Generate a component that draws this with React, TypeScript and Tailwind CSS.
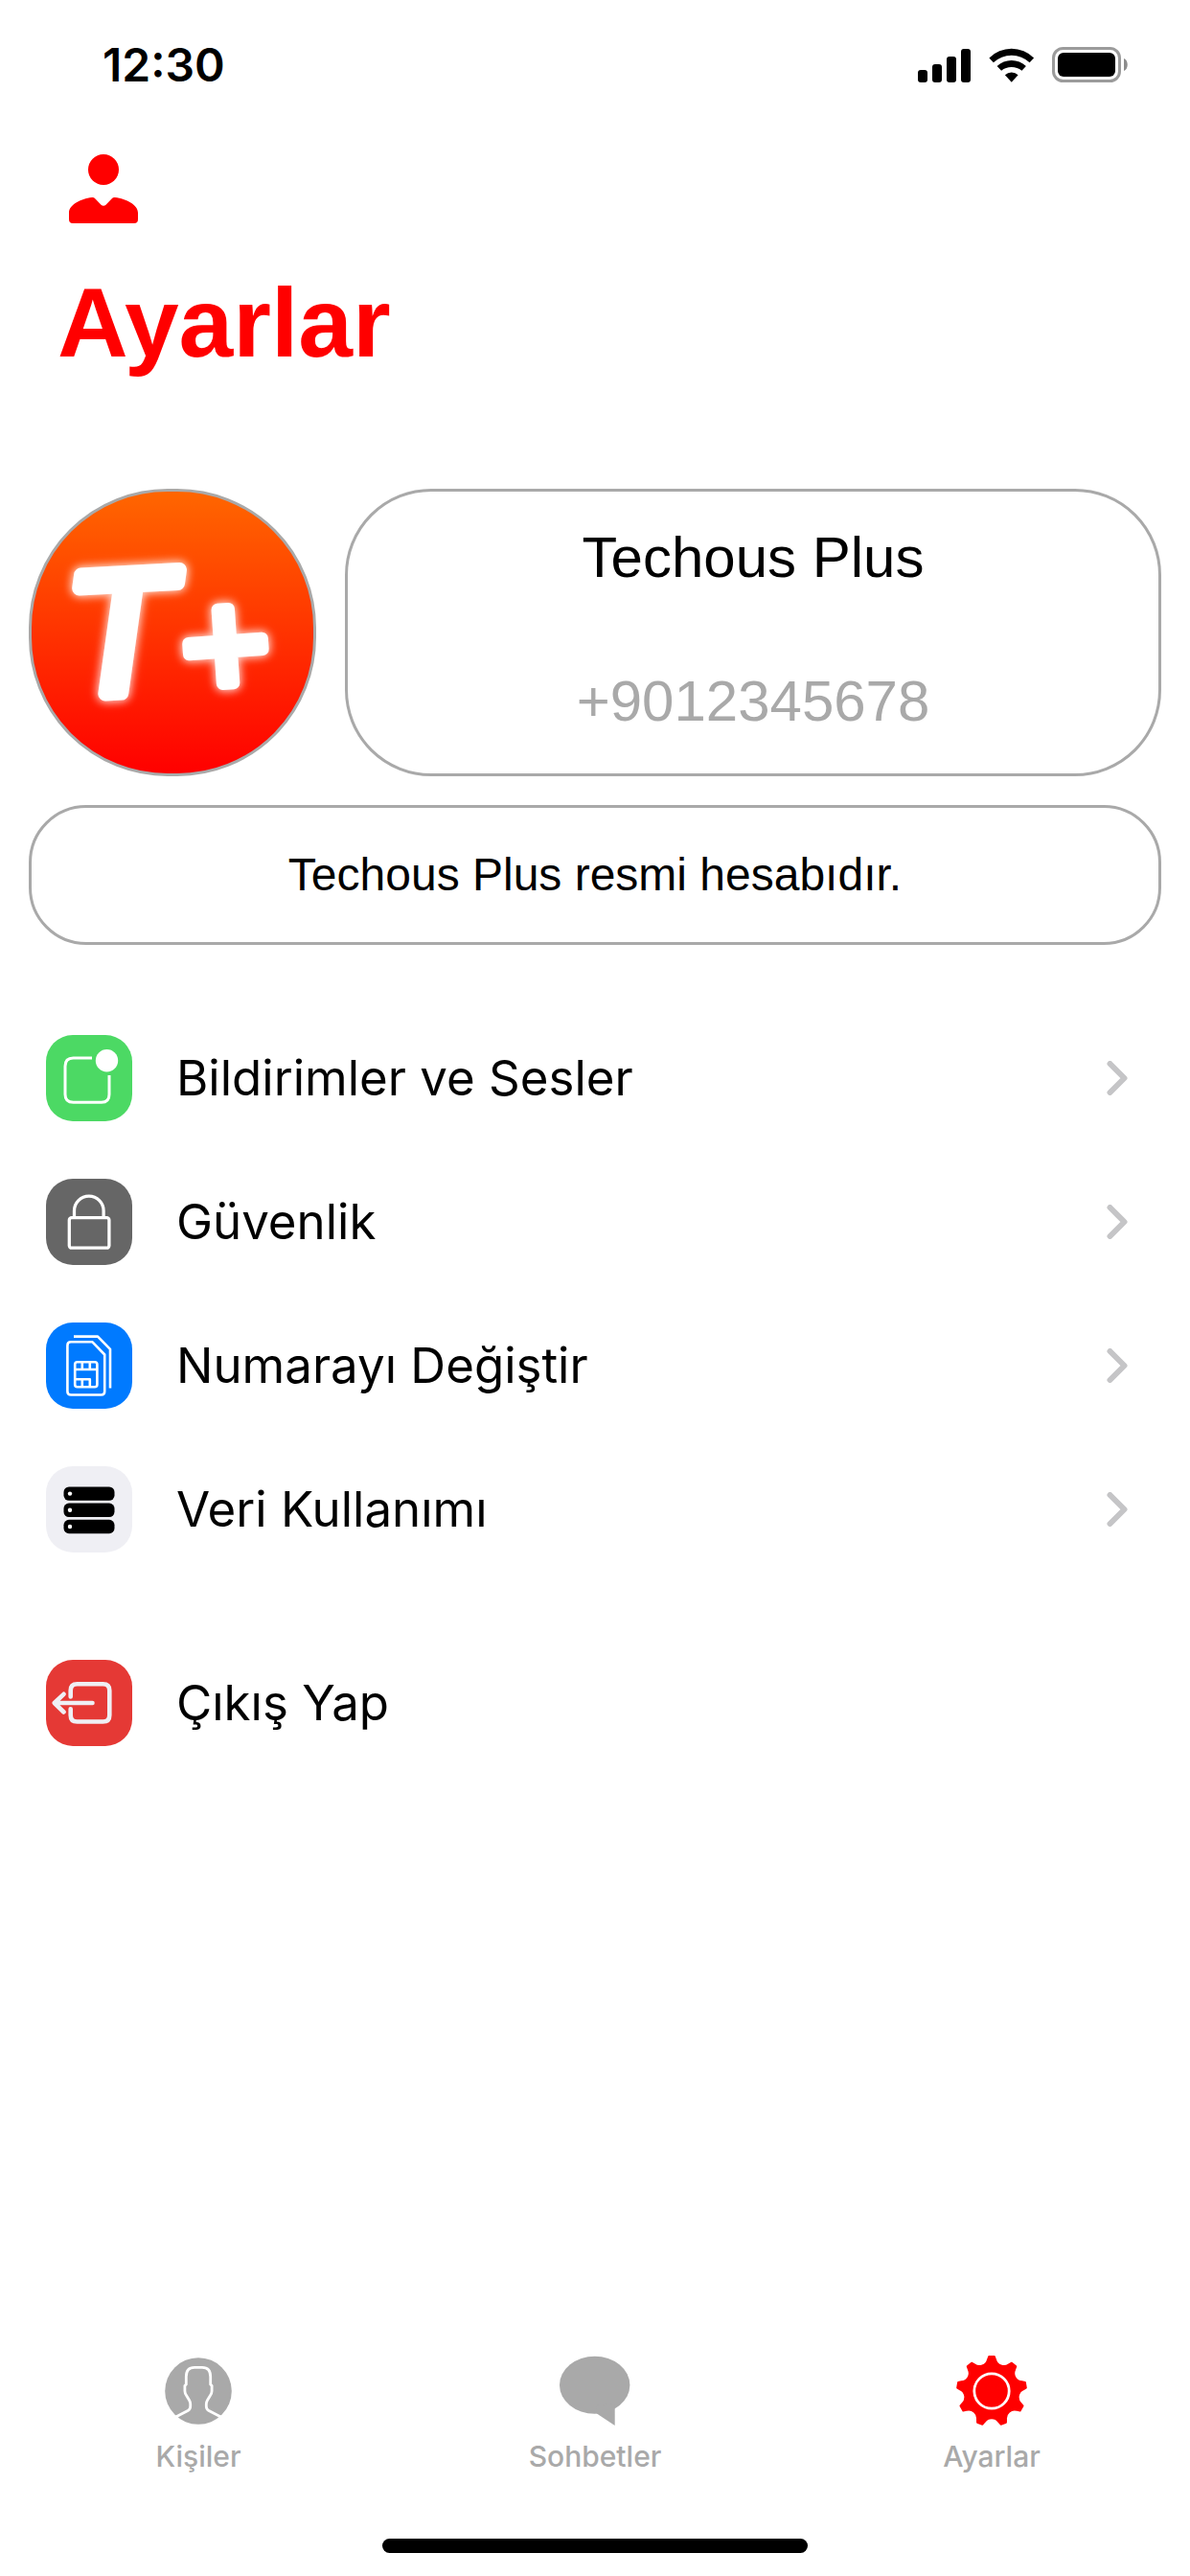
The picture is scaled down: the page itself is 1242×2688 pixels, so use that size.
import React from 'react';

const GEAR_TEETH = 9;

const gearPoint = (deg: number, radius: number) => {
  const rad = ((deg - 90) * Math.PI) / 180;
  return `${(37 + radius * Math.cos(rad)).toFixed(2)} ${(37 + radius * Math.sin(rad)).toFixed(2)}`;
};

// Tooth tips joined by concave arcs
const gearPath =
  Array.from({ length: GEAR_TEETH }, (_, i) => {
    const a = i * (360 / GEAR_TEETH);
    const start = `${i === 0 ? 'M' : 'L'}${gearPoint(a - 4.5, 36)}`;
    return `${start} L${gearPoint(a + 4.5, 36)} L${gearPoint(a + 7, 33)} A9 9 0 0 0 ${gearPoint(a + 33, 33)}`;
  }).join(' ') + ' Z';

const StatusBar: React.FC = () => (
  <div className="flex h-[135px] items-center justify-between pl-[107px] pr-16">
    <span className="text-[48px] leading-[60px] font-semibold text-black">12:30</span>
    <div className="flex items-center gap-[18px]">
      <svg width="56" height="36" viewBox="0 0 56 36" aria-hidden="true">
        <rect x="0" y="23" width="10" height="13" rx="3" />
        <rect x="15" y="17" width="10" height="19" rx="3" />
        <rect x="30" y="9" width="10" height="27" rx="3" />
        <rect x="45" y="1" width="10" height="35" rx="3" />
      </svg>
      <svg width="48" height="36" viewBox="0 0 48 36" strokeLinejoin="round" aria-hidden="true">
        <path d="M0.4 10.4A33 33 0 0 1 47.1 10.4L42.6 15.2A27.5 27.5 0 0 0 4.9 15.2Z" />
        <path d="M8.6 19A22 22 0 0 1 38.9 19L34.4 23.8A17 17 0 0 0 13.1 23.8Z" />
        <path d="M16.9 28.3A10 10 0 0 1 30.6 28.3L23.75 35.8Z" />
      </svg>
      <svg width="80" height="38" viewBox="0 0 80 38" aria-hidden="true">
        <rect x="1.5" y="1.5" width="69" height="34" rx="10" fill="none" stroke="#9b9b9b" strokeWidth="3" />
        <rect x="6" y="6" width="60" height="25" rx="6" />
        <path d="M75 12C80 14 80 23 75 25Z" fill="#8c8c8c" />
      </svg>
    </div>
  </div>
);

const Avatar: React.FC = () => (
  <div className="size-[300px] shrink-0 overflow-hidden rounded-[145px] border-[3px] border-[#a9a9a9] bg-linear-to-b/srgb from-[#ff6600] to-[#ff0000]">
    <svg viewBox="3 3 294 294" className="size-full" aria-label="Techous Plus" role="img">
      <g
        className="[filter:drop-shadow(0_0_5px_rgba(255,255,255,0.75))_drop-shadow(0_0_5px_rgba(255,255,255,0.4))]"
        fill="#fff"
        stroke="#fff"
        strokeLinejoin="round"
        fontFamily="'Liberation Sans', Arial, sans-serif"
        fontStyle="italic"
      >
        <text x="39" y="212" fontSize="182" strokeWidth="15" transform="rotate(-3 117 150)">T</text>
        <text x="157" y="217" fontSize="158" strokeWidth="13" transform="rotate(-4 207 165)">+</text>
      </g>
    </svg>
  </div>
);

const NotificationIcon = () => (
  <svg viewBox="0 0 90 90" fill="none" stroke="#fff" strokeWidth="3" aria-hidden="true">
    <path d="M48 24H28.500Q20 24 20 32.500V62Q20 70.300 28.500 70.300H58Q66 70.300 66 62V42" />
    <circle cx="63.500" cy="26.700" r="11.700" fill="#fff" stroke="none" />
  </svg>
);

const LockIcon = () => (
  <svg viewBox="0 0 90 90" fill="none" stroke="#fff" strokeWidth="3.300" aria-hidden="true">
    <rect x="24.300" y="40.600" width="41.600" height="31.600" rx="2.500" />
    <path d="M29.500 40V33.500A15.300 15.300 0 0 1 60.100 33.500V40" />
  </svg>
);

const SimIcon = () => (
  <svg viewBox="0 0 90 90" fill="none" stroke="#fff" strokeWidth="2.600" strokeLinejoin="round" aria-hidden="true">
    <path d="M26 20.300H48.500L61.200 33.500V72Q61.200 75.500 57.700 75.500H26Q22.400 75.500 22.400 72V24Q22.400 20.300 26 20.300Z" />
    <path d="M29 14.600H54L67 27.800V68.500" />
    <rect x="30.200" y="41.200" width="23.200" height="26" rx="2.500" />
    <path d="M30 49H53.500M37.800 41V49M45.800 41V49M30 59.200H45.800V67M37.800 59.200V67" />
  </svg>
);

const ServerIcon = () => (
  <svg viewBox="0 0 90 90" aria-hidden="true">
    {[21.4, 38.6, 55.8].map((y) => (
      <g key={y}>
        <rect x="18.500" y={y} width="53" height="14.400" rx="5.500" />
        <circle cx="25" cy={y + 7.2} r="2.200" fill="#fff" />
      </g>
    ))}
  </svg>
);

const LogoutIcon = () => (
  <svg viewBox="0 0 90 90" fill="none" stroke="#efeff4" strokeWidth="4.600" strokeLinecap="round" strokeLinejoin="round" aria-hidden="true">
    <path d="M25.700 38.500V32Q25.700 25.300 32.500 25.300H59.500Q66.300 25.300 66.300 32V57.700Q66.300 64.500 59.500 64.500H32.500Q25.700 64.500 25.700 57.700V51.200" />
    <path d="M48.500 45H9M18.500 35.800L8.800 45L18.500 54.500" />
  </svg>
);

const ChevronIcon = () => (
  <svg width="22" height="36" viewBox="0 0 22 36" fill="none" stroke="#c5c5c7" strokeWidth="6" strokeLinecap="round" strokeLinejoin="round" aria-hidden="true">
    <path d="M3.500 3L18.500 18L3.500 33" />
  </svg>
);

const ContactsIcon = () => (
  <svg width="74" height="74" viewBox="0 0 74 74" aria-hidden="true">
    <circle cx="37" cy="37" r="34.800" fill="#a9a9a9" />
    <path
      d="M13.500 64L26 57.500Q28.700 56 28.700 53V50.500Q28.700 48.500 27.500 46.500L24.500 41.500Q23 39.500 22.900 37V31.500L24.300 30V22Q24.300 12.400 33 12.400H41Q49.700 12.400 49.700 22V30L51.100 31.500V37Q51 39.500 49.500 41.500L46.500 46.500Q45.300 48.500 45.300 50.500V53Q45.300 56 48 57.500L60.500 64"
      fill="none"
      stroke="#fff"
      strokeWidth="2.800"
    />
  </svg>
);

const ChatsIcon = () => (
  <svg width="74" height="74" viewBox="0 0 74 74" fill="#a9a9a9" aria-hidden="true">
    <ellipse cx="36.700" cy="30.700" rx="36.700" ry="30" />
    <path d="M38.500 60.300L57.700 73V50L38 52Z" />
  </svg>
);

const SettingsIcon = () => (
  <svg width="74" height="74" viewBox="0 0 74 74" aria-hidden="true">
    <path d={gearPath} fill="#ff0000" stroke="#ff0000" strokeWidth="2" strokeLinejoin="round" />
    <circle cx="37" cy="37" r="18.200" fill="none" stroke="#fff" strokeWidth="2.800" />
  </svg>
);

const settings = [
  { label: 'Bildirimler ve Sesler', color: 'bg-[#4cd964]', icon: NotificationIcon },
  { label: 'Güvenlik', color: 'bg-[#666666]', icon: LockIcon },
  { label: 'Numarayı Değiştir', color: 'bg-[#007aff]', icon: SimIcon },
  { label: 'Veri Kullanımı', color: 'bg-[#efeff4]', icon: ServerIcon },
];

const tabs = [
  { label: 'Kişiler', href: '#kisiler', icon: ContactsIcon },
  { label: 'Sohbetler', href: '#sohbetler', icon: ChatsIcon },
  { label: 'Ayarlar', href: '#ayarlar', icon: SettingsIcon },
];

interface SettingsRowProps {
  label: string;
  color: string;
  icon: React.FC;
  chevron?: boolean;
}

const SettingsRow: React.FC<SettingsRowProps> = ({ label, color, icon: Icon, chevron = true }) => (
  <button type="button" className="flex h-[90px] w-full items-center gap-[46px] text-left">
    <span className={`size-[90px] shrink-0 overflow-hidden rounded-[28px] ${color}`}>
      <Icon />
    </span>
    <span className="flex-1 text-[51px] leading-[66px] text-black">{label}</span>
    {chevron && <ChevronIcon />}
  </button>
);

const App: React.FC = () => {
  return (
    <div className="flex min-h-screen flex-col bg-white font-['Inter',sans-serif]">
      <StatusBar />

      <header className="px-[60px] pt-[26px]">
        <button type="button" aria-label="Profil" className="ml-3 block">
          <svg width="72" height="72" viewBox="0 0 72 72" fill="#ff0000" aria-hidden="true">
            <circle cx="36" cy="16" r="16" />
            <path d="M0 61C0 53 12 46.500 24 45.100Q26 44.900 27.500 46.500L33.500 52.800Q36 54.800 38.500 52.800L44.500 46.500Q46 44.900 48 45.100C60 46.500 72 53 72 61V68Q72 72 68 72H4Q0 72 0 68Z" />
          </svg>
        </button>
        <h1 className="mt-11 font-['Liberation_Sans',Arial,sans-serif] text-[102px] leading-[120px] font-bold text-[#ff0000]">
          Ayarlar
        </h1>
      </header>

      <main className="mt-[113px] px-[30px]">
        <section className="font-['Liberation_Sans',Arial,sans-serif]">
          <div className="flex gap-[30px]">
            <Avatar />
            <div className="flex flex-1 flex-col items-center gap-[78px] rounded-[90px] border-[3px] border-[#a9a9a9] pt-[33px] text-[60px] leading-[72px]">
              <p className="text-black">Techous Plus</p>
              <p className="text-[#a9a9a9]">+9012345678</p>
            </div>
          </div>
          <div className="mt-[30px] flex h-[146px] items-center justify-center rounded-[60px] border-[3px] border-[#a9a9a9]">
            <p className="text-[48px] leading-[60px] text-black">Techous Plus resmi hesabıdır.</p>
          </div>
        </section>

        <section className="mt-[94px] flex flex-col gap-[60px] pr-[35px] pl-[18px]">
          {settings.map((item) => (
            <SettingsRow key={item.label} {...item} />
          ))}
        </section>

        <section className="mt-28 pl-[18px]">
          <SettingsRow label="Çıkış Yap" color="bg-[#e53935]" icon={LogoutIcon} chevron={false} />
        </section>
      </main>

      <footer className="mt-auto pb-6">
        <nav className="grid grid-cols-3">
          {tabs.map((tab) => {
            const IconComponent = tab.icon;
            return (
              <a key={tab.label} href={tab.href} className="flex flex-col items-center gap-[13px]">
                <IconComponent />
                <span className="text-[30px] leading-[36px] font-medium text-[#a9a9a9]">{tab.label}</span>
              </a>
            );
          })}
        </nav>
        {/* Home indicator */}
        <div className="mx-auto mt-[68px] h-[15px] w-[444px] rounded-full bg-black"></div>
      </footer>
    </div>
  );
};

export default App;
